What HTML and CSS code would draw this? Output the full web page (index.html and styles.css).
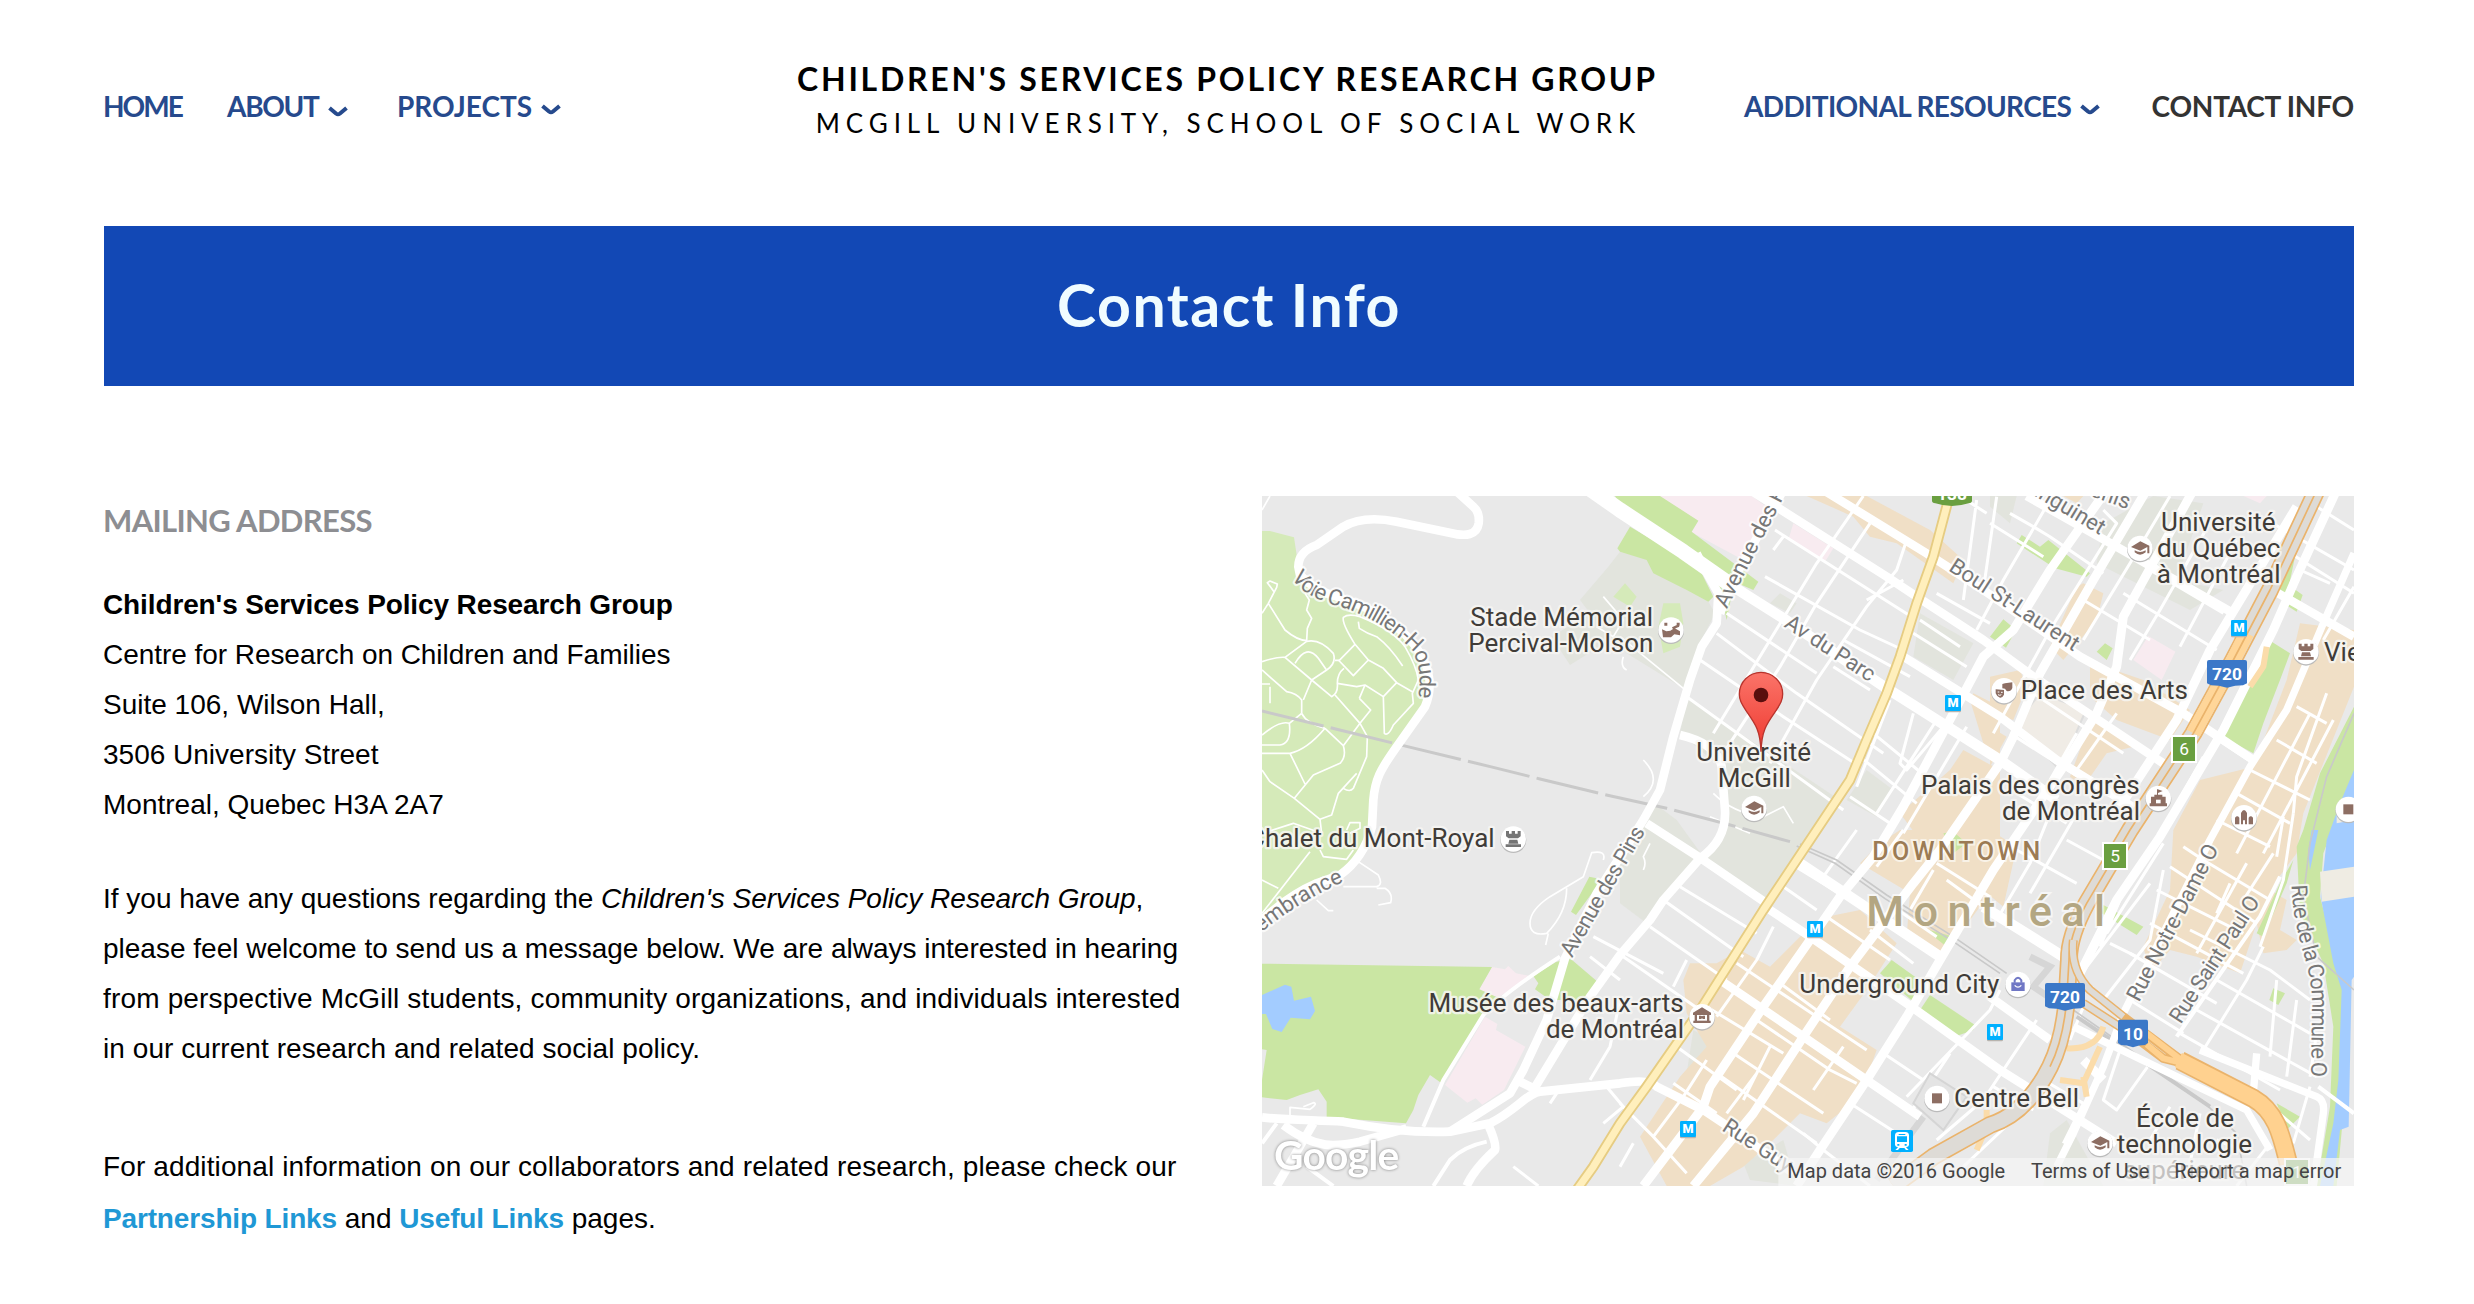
FILE: index.html
```
<!DOCTYPE html>
<html lang="en">
<head>
<meta charset="utf-8">
<title>Contact Info – Children's Services Policy Research Group</title>
<link rel="stylesheet" href="styles.css">
</head>
<body>
<header class="site-header">
  <nav class="nav nav-left">
    <a class="nav-item home" href="#">HOME</a>
    <a class="nav-item about" href="#">ABOUT<svg class="chevron low" viewBox="0 0 20 12"><path d="M1.500 2 8 7.500Q10 9 12 7.500L18.500 2"/></svg></a>
    <a class="nav-item projects" href="#">PROJECTS<svg class="chevron" viewBox="0 0 20 12"><path d="M1.500 2 8 7.500Q10 9 12 7.500L18.500 2"/></svg></a>
  </nav>
  <div class="brand">
    <div class="brand-title">CHILDREN'S SERVICES POLICY RESEARCH GROUP</div>
    <div class="brand-sub">MCGILL UNIVERSITY, SCHOOL OF SOCIAL WORK</div>
  </div>
  <nav class="nav nav-right">
    <a class="nav-item resources" href="#">ADDITIONAL RESOURCES<svg class="chevron" viewBox="0 0 20 12"><path d="M1.500 2 8 7.500Q10 9 12 7.500L18.500 2"/></svg></a>
    <a class="nav-item contact" href="#">CONTACT INFO</a>
  </nav>
</header>
<h1 class="banner">Contact Info</h1>
<main class="content">
  <section class="info">
    <h2 class="info-heading">MAILING ADDRESS</h2>
    <p class="address">
      <strong class="name">Children's Services Policy Research Group</strong><br>
      <span class="l0">Centre for Research on Children and Families</span><br>
      Suite 106, Wilson Hall,<br>
      3506 University Street<br>
      Montreal, Quebec H3A 2A7
    </p>
    <p class="message">
      <span class="l1">If you have any questions regarding the <em>Children's Services Policy Research Group</em>,</span><br>
      <span class="l2">please feel welcome to send us a message below. We are always interested in hearing</span><br>
      <span class="l3">from perspective McGill students, community organizations, and individuals interested</span><br>
      <span class="l4">in our current research and related social policy.</span>
    </p>
    <p class="more">
      <span class="l5">For additional information on our collaborators and related research, please check our</span><br>
      <a href="#">Partnership Links</a> and <a href="#">Useful Links</a> pages.
    </p>
  </section>
  <svg class="map" viewBox="36 48 3276 2070" role="img" aria-label="Map of downtown Montréal">
    <defs>
      <linearGradient id="pinfill" x1="0" y1="0" x2="0" y2="1"><stop offset="0" stop-color="#fb7469"/><stop offset="1" stop-color="#ee382f"/></linearGradient>
      <g id="disc"><circle cy="3" r="39" fill="#bbb"/><circle r="38" fill="#fff"/></g>
      <g id="grad"><use href="#disc"/><path class="brown" d="M-27-4 1-21 28-8V15H22V-4L1 7ZM-16 6Q0 16 17 6V12Q0 26-16 12Z"/></g>
      <g id="rook"><path d="M-22-24h9v8h8v-8h10v8h8v-8h9v16l-8 6h-28l-8-6ZM-12 2h24l3 12h-30ZM-23 16h46v8h-46Z"/></g>
      <g id="metro"><rect x="-24" y="-20" width="48" height="48" rx="4" fill="#b8b4ae"/><rect x="-24" y="-24" width="48" height="48" rx="4" fill="#00b0ff"/><text y="13" class="metro-m">M</text></g>
      <path id="shield" d="M-60-35Q-60-41-54-41H54Q60-41 60-35V29L48 35Q25 35 0 42Q-25 35-48 35L-60 29Z" fill="#3b78c8"/>
    </defs>
    <rect x="36" y="48" width="3276" height="2070" fill="#e9e9e9"/>

    <!-- campus grounds -->
    <g fill="#e2e4dd">
      <path d="M1110 215 1200 240 1220 280 1375 365 1395 400 1340 510 1300 625 1130 520 1080 480 960 555 905 470 1020 400 990 360 1075 260Z"/>
      <path d="M1310 650 1470 760 1770 960 1690 1080 1560 1280 1350 1140 1425 1050 1410 860 1290 760Z"/>
      <path d="M1200 960 1280 1020 1360 1130 1240 1260 1190 1330 1110 1270 1110 1130Z"/>
      <path d="M1850 870 1930 930 1880 1010 1790 960ZM2010 400 2170 490 2110 600 1990 530ZM1590 340 1640 370 1620 400 1560 370ZM2220 48 2300 48 2280 130 2220 80ZM2560 130 2710 48 2860 70 2780 300 2920 330 2820 390 2540 250ZM1330 1650 1420 1700 1380 1820 1310 1780ZM1480 2050 1600 1980 1640 2118 1500 2100ZM2400 1960 2450 1920 2560 2118 2380 2118Z"/>
    </g>
    <!-- commercial blocks -->
    <g fill="#f0dfc6">
      <path d="M1670 48H1850L2040 150 2140 240 2110 310 1940 190 1860 170 1810 110ZM2170 640 2250 680V850L2200 790 2160 660ZM2140 810 2250 870V1080H2010L1950 1000 2100 870Z"/>
      <path d="M2500 310 2560 340 2540 420 2440 540 2400 500 2480 320ZM2520 545 2680 600 2820 690 2760 780 2600 720 2520 650ZM2530 700 2650 800 2570 820 2500 920 2460 890ZM2220 590 2310 570 2330 620 2290 720 2220 700ZM2220 740 2270 770 2220 860ZM2440 48H2500L2480 70Z"/>
      <path d="M3150 430 3312 450V620L3220 850 3160 1000 3140 1120 3080 1200 3020 1330 2970 1480 2840 1430 2760 1410 2700 1480 2680 1400 2760 1230 2770 1050 2850 900 3010 860 3110 600Z"/>
      <path d="M3060 1230 3110 1260 3090 1350 3140 1380 3110 1410 3040 1420 3020 1330Z"/>
      <path d="M1890 1090 1950 1050H2250V1200L2070 1440 1970 1370 1980 1240 1830 1150ZM2220 1050 2300 1100 2260 1280 2200 1230Z"/>
      <path d="M1650 1370 1730 1310 1830 1290 1940 1390 1850 1530 1770 1640 1880 1710 1830 1850 1730 1930 1650 1900 1560 1990 1480 2060 1380 2118H1250L1170 1970 1290 1790 1370 1700 1310 1600 1300 1500 1320 1450 1400 1450 1470 1410 1560 1460Z"/>
    </g>
    <path d="M2370 640 2508 690 2430 870 2370 810 2300 730Z" fill="#f0ece6" stroke="#ddd" stroke-width="6"/>
    <!-- hospitals -->
    <g fill="#f8ebf0">
      <path d="M1225 48H1505L1555 85 1480 240 1325 157 1345 122ZM1630 130 1750 205 1725 245 1615 180ZM2695 468 2776 515 2735 600 2650 540ZM2980 48H3050L3030 70Z"/>
      <path d="M726 1461 765 1468 775 1458 798 1480 850 1490 780 1530 740 1555 688 1528ZM705 1610 742 1632 738 1650 826 1700 762 1830 697 1874 677 1855 652 1868 585 1815Z"/>
    </g>
    <!-- parks and water -->
    <path fill="#d5eab9" d="M36 153H60L132 172 140 225 135 270 230 330 400 400 500 500 530 600 520 670 440 790 400 860 370 950 365 1050 340 1090 300 1160 200 1210 36 1320ZM1125 310 1160 350 1140 380 1090 350ZM1240 370 1290 370 1300 430 1290 500 1240 520 1225 440Z"/>
    <g fill="#cae6a3">
      <path d="M36 1451 726 1461 688 1528 760 1560 700 1605 575 1810 540 1785 505 1845 490 1890 468 1930 230 1912V1865L205 1828 150 1845 110 1860 36 1852V1800L50 1710 36 1708Z"/>
      <path d="M850 1488 918 1446 960 1435 1040 1503 1000 1560 900 1560 855 1528 865 1510ZM1018 1190 1040 1195V1220L978 1305 963 1295Z"/>
      <path d="M1095 48H1230L1345 122 1325 155 1525 305 1510 330 1440 300 1110 75ZM1140 140 1102 205 1110 215 1190 240 1210 280 1310 330 1375 365 1390 350 1350 270 1260 210ZM1380 270 1450 320 1430 420 1410 330Z"/>
      <path d="M1925 1440 1995 1490 1990 1565 1890 1480ZM2040 1545 2175 1635 2170 1650 2120 1668 2010 1590ZM3065 485 3120 520 3090 600 3040 730 3010 820 2918 770ZM2315 165 2370 200 2395 180 2520 280 2510 290 2415 265 2300 190ZM2260 418 2298 450 2268 503 2220 470ZM2565 490 2588 505 2570 540 2540 515ZM2560 1275 2680 1340 2660 1365 2555 1300ZM3070 1525 3105 1540 3085 1575 3058 1560ZM3130 150 3160 110 3110 350 3060 340ZM3130 325 3158 345 3140 395 3100 370ZM2080 1060 2110 1055 2150 1090 2110 1120ZM2020 1345 2110 1370 2090 1400ZM3080 1870 3150 1910 3110 1950ZM3130 1140 3090 1210 3020 1360 3040 1370 3110 1210Z"/>
      <path d="M3312 680 3210 880 3160 1050 3140 1100 3150 1300 3220 1450 3250 1640 3240 1880 3200 2118H3260L3280 1900 3300 1700 3270 1480 3210 1250 3220 1120 3312 880Z"/>
    </g>
    <path fill="#a3ccff" d="M36 1545 105 1514 124 1520 132 1562 183 1550 195 1593 180 1618 122 1613 95 1656 67 1647 48 1602H36ZM3312 870 3270 970 3230 1080 3212 1250 3250 1450 3275 1530 3265 1800 3250 1930 3210 2118H3250L3270 1950 3296 1940 3305 1500 3312 1490ZM3185 1050H3205L3180 1170 3175 1110Z"/>
    <path fill="#efece3" d="M3210 1175 3312 1160V1250L3215 1265ZM3260 990 3312 980V1020L3260 1030Z"/>

    <!-- paths through the cemetery and minor lanes -->
    <g class="road" stroke-width="5">
      <path d="M36 400 55 370 80 322 82 312 60 303 52 308 72 335M55 370 105 450Q140 480 170 482L172 445 185 415 170 390 178 360 165 340"/>
      <path d="M36 545Q80 530 105 532L170 484Q210 475 250 520 260 550 230 570L185 600 105 532M36 570 110 635Q140 640 155 660L155 700M185 600 245 650Q265 640 262 610 262 580 282 565M135 550Q170 490 205 535L228 568"/>
      <path d="M255 541H268L315 493Q275 430 280 412 295 400 330 410 430 450 465 500 500 560 505 600L487 640 490 670 430 735Q415 770 403 760L400 650 440 608 487 635M325 425 328 445Q350 460 380 470 420 500 458 558"/>
      <path d="M265 540 310 587 355 540 315 493M355 540 400 565 440 608M262 610 320 620 345 615 328 655M345 615 400 650M255 645 330 730 352 770 350 830 310 925Q300 938 280 925M328 655 362 690 330 730 280 797 225 745M280 797Q290 830 270 850L190 885 133 955M225 745Q170 810 120 820L165 912M120 820H36M36 870 60 905 133 955 210 1018 245 1005 265 940 320 880"/>
      <path d="M155 700Q170 730 225 745M155 700 118 730Q90 720 36 765M118 730Q125 790 90 795H36M185 600 160 660M210 1018 215 1060M36 1060 130 1030 215 1060M36 1200 85 1225M36 1300 180 1115M60 612H36M60 670V620M290 1050 300 1028H330V1045L300 1060M210 1110 220 1130 290 1138 310 1110"/>
      <path d="M325 1145 385 1185Q400 1215 380 1220H280M380 1225H405Q430 1240 422 1268L385 1275M200 1260 235 1292H250M1060 1140Q1070 1110 1025 1118L1000 1190 900 1250Q840 1290 840 1330 840 1370 890 1360 950 1300 950 1225M895 1360 887 1395M36 90 60 48M120 1920V1882L180 1888Q205 1870 190 1868L160 1880M1110 470 1300 625M1060 350 1120 420 1090 470 1040 440M1120 530Q1110 560 1130 570M1180 1170Q1190 1150 1180 1130L1200 1090M1390 940Q1450 1000 1540 1010L1600 980 1630 1030M1380 1010 1500 1060M1180 840Q1240 900 1180 950"/>
    </g>
    <!-- minor streets -->
    <g class="road" stroke-width="9">
      <path d="M1575 150 2000 420M1545 290 1830 450 1960 510M1480 330 1760 520M1430 400 1700 580M1400 460 1640 640 1900 820M1350 540 1600 710 1830 860M1310 650 1560 830 1780 990M1860 130 1700 370 1590 560 1420 820M1840 48 1700 250 1560 480 1390 760M1960 300 1850 360M1970 180 1940 270 1850 380 1700 600 1560 850M1600 170 1570 210M1780 480 1980 590M1750 560 1860 630"/>
      <path d="M1920 660 1820 920M1990 700 1950 850 1970 870 2080 740M1870 760 2040 900M1830 830 2000 970M1800 950 1920 1030M2060 720 1880 1000M2150 740 1960 1060M1990 460 2150 560M2010 420 2130 500M2060 340 2220 430M2130 48 2210 100M2180 60 2140 360M2220 130 2380 230M2180 450 2260 300 2400 60M2240 50 2200 330M2280 100 2350 140 2400 170 2560 280M2560 90 2600 130 2400 450 2230 760M2760 48 2640 250 2500 480M2890 110 2730 390 2640 540M2960 180 2790 500M2500 360 2700 480M2620 340 2900 510M2700 270 2920 400"/>
      <path d="M3050 120 3312 270M3090 200 3312 340M3150 270 3240 310M3200 80 3312 150M3312 320 3220 480M2350 640 2620 820M2280 760 2500 900 2640 980M2300 940 2450 1030M2480 760 2400 900M2600 700 2480 870M2400 1000 2340 1150 2240 1320M2480 1000 2340 1240M2300 1110 2480 1210M2450 1080 2560 1140"/>
      <path d="M2860 830 2720 1080M2890 770 3010 850M3000 870 3180 960M2960 940 3120 1030M2900 1020 3060 1100M3180 700 2960 1120M3250 720 3040 1120M3140 680 3230 730M3080 780 3200 850M3230 640 3140 890 3130 1000M3100 1010 3080 1130M3070 1120 2980 1260M2800 1100 2860 1140 3060 1260M2760 1160 3020 1330M2720 1230 2980 1360M2700 1330 2980 1480M2640 1420 2900 1570M2560 1560 2700 1380 2740 1170M2860 1140 2760 1330M2990 1150 2840 1420M2940 1210 2900 1300"/>
      <path d="M2820 1350 3060 1470 3180 1560M2900 1500 3180 1660M2840 1590 3200 1790M2790 1660 3090 1830M3040 1400 2990 1500 2860 1710M3080 1500 3060 1730M3140 1560 3110 1790M3200 1660 3180 1790M3130 1000 3100 1200 3030 1400M2480 1500 2700 1210M2580 1390 2660 1430M2610 1260 2550 1400M2740 1090 2570 1360M2640 1560 2800 1660M3030 1850 3180 1980M3180 1820 3130 1990"/>
      <path d="M1290 1220 1520 1360M1240 1260 1480 1430M1200 1340 1430 1500M1120 1430 1350 1590M1310 1440 1270 1520M1600 1220 1700 1290M1620 1150 1800 1260M1460 1450 1640 1570 1850 1710M1370 1580 1600 1720M1280 1700 1460 1830M1270 1810 1400 1900M1570 1340 1520 1440 1400 1610M1730 1310 1920 1440M1590 1510 1740 1620M1860 1380 1780 1480M1520 1620 1740 1770 1820 1810M1450 1720 1720 1900M1400 1780 1700 1990M1560 1700 1480 1860M1520 1780 1430 1900M1710 1580 1580 1800M1780 1700 1690 1830M1860 1350 1990 1450M1930 1280 2060 1370M1880 1160 1960 1050M1820 1050 1720 1190"/>
      <path d="M1110 1870 1210 1970 1310 2080M1210 1970 1300 1850 1370 1740M1150 1990 1110 2060M1900 1720 2020 1800M1850 1800 2010 1910M1800 1870 1940 1960M1970 1850 2220 1590 2250 1530M2100 1720 1980 1900M1720 2010 1860 2118M1660 1960 1720 2010M2060 1980 2200 1860 2360 1620M2140 2060 2320 1890M2230 1820 2350 1890M2500 1580 2460 1680M2380 1800 2500 1870 2440 1990M2620 1680 2560 1860 2600 1890 2700 1750M2700 1980 2760 1880M2850 1900 2820 2050M2900 1980 3000 2020M3060 1990 2960 2118M1020 1430 1110 1500M1030 1370 1240 1480M1110 1560 1080 1700 1020 1800M1070 1820 1120 1880 1060 1930M920 1840 900 1870M790 2060 865 2118M2050 1170 1980 1290M2090 1200 2200 1280M2060 1150 2220 1250"/>
    </g>
    <!-- railway yards -->
    <g fill="none" stroke="#c9c9c9">
      <path stroke-width="9" stroke-dasharray="190 22" d="M36 693 440 792 730 862 870 897 1056 942 1250 985 1430 1032 1620 1085"/>
      <path stroke-width="5" d="M1650 1092 1760 1140 1910 1245 2110 1370 2270 1480M1640 1098 1755 1150 1905 1256 2110 1385 2250 1480M2470 1590 2620 1695 2870 1875 2960 1960 2990 2118"/>
      <path stroke-width="12" d="M2480 1610 2880 1880"/>
      <path stroke-width="20" stroke="#d6d6d6" d="M2340 1430 2400 1460 2350 1520 2440 1580M2020 1910 1880 2100"/>
      <path stroke-width="5" d="M3312 700 3230 890 3180 1090 3160 1250 3200 1430 3312 1530"/>
    </g>
    <path d="M2040 1780 2150 1850 2080 1950 1990 1870Z" fill="#e4e4e4" stroke="#d5d5d5" stroke-width="6"/>

    <!-- main streets -->
    <g class="road">
      <g stroke-width="26">
        <path d="M610 25 670 80Q690 98 686 130C680 170 640 165 620 163L440 125Q340 105 280 140L200 195Q145 215 145 260L150 285Q190 330 260 350C420 400 480 470 510 520 540 570 550 620 525 680L440 800C390 870 375 900 370 960L366 1040C350 1100 320 1150 270 1185L200 1210C130 1240 80 1280 36 1320"/>
        <path d="M36 1912C100 1920 200 1920 280 1925 380 1945 480 1960 600 1955L720 1930C800 1890 830 1840 870 1835L1110 1810Q1200 1795 1220 1820L1360 1890 1450 1950 1630 2080M100 1935C200 2010 260 2000 330 1985L470 1945"/>
        <path d="M600 1955 780 1840 820 1770 890 1620 945 1435 1040 1240 1180 1020 1230 930 1270 770 1320 600 1355 500 1400 430 1405 340 1360 260 1340 220M1410 400 1450 300 1600 30M1290 765Q1400 790 1415 860L1425 990Q1430 1080 1350 1135L1240 1260 1200 1320 1110 1425 1020 1550 850 1830M800 1800 860 1830"/>
        <path d="M190 1930 80 2118M715 1935Q740 1990 735 2010 670 2070 650 2118"/>
        <path d="M1500 30 1910 290 2000 350 2200 480 2350 590 2500 690 2740 850M1720 30 2030 220 2200 330 2490 530 2800 700 3010 840M2330 48 2600 200 2950 400M3050 320 3312 470M1960 530 2250 710 2420 840 2680 1000"/>
        <path d="M1190 1030 1360 1140 1550 1270M1560 1290 1680 1370 1970 1570 2250 1770 2600 1990M1410 1500 1660 1670 2010 1910M2220 1550 2400 1680"/>
      </g>
      <path stroke-width="32" d="M1650 1150 1830 1270 2070 1430M2200 1280 2440 1430"/>
      <path stroke-width="46" d="M1010 20 1110 90 1300 215 1450 320"/>
      <path stroke-width="32" d="M1450 320 1600 415 1910 625 2250 840 2420 960"/>
      <g stroke-width="27">
        <path d="M2570 30 2400 270 2290 450 2200 530 2110 700 1960 980 1870 1130 1770 1250 1680 1380 1540 1580 1380 1820 1360 1880 1180 2118"/>
        <path d="M2690 30 2530 300 2370 580 2290 770 2250 850 2070 1110 1990 1210 1800 1460 1660 1670 1510 1900 1330 2118"/>
        <path d="M2830 30 2620 410 2600 560 2540 700 2440 860 2230 1170 2070 1440 1970 1610 1850 1800 1710 2010 1640 2118"/>
        <path d="M3140 80 2880 510 2780 720 2610 980"/>
        <path d="M3260 30 3140 290 3070 450 2920 750 2730 1070 2600 1260 2480 1500"/>
        <path d="M2500 1740 2560 1800"/>
      </g>
      <path stroke-width="22" d="M3312 220 3220 430 3110 690 3000 860 2880 1080 2700 1440 2620 1600 2560 1760 2470 1960 2420 2060M2470 1640 2780 1790 2990 1890 3060 2010M2850 1710 3100 1810 3200 1850Q3225 1860 3220 1900L3190 2118M3020 1720 3010 1840"/>
      <path stroke-width="12" d="M3090 1190 3030 1310 2780 1670M520 1940 580 1800 700 1605Q760 1540 930 1430M710 1985Q640 2000 600 2040L550 2118M36 1990 80 1930M250 2118 170 2060M3205 1820 3312 1900"/>
    </g>
    <!-- Sherbrooke -->
    <g fill="none" stroke-linejoin="round">
      <path stroke="#e6cc82" stroke-width="32" d="M2095 60 2050 230 2000 370 1950 530 1910 640 1850 780 1800 900 1690 1065 1540 1290 1350 1590 1190 1820 1110 1930 1030 2060 980 2130"/>
      <path stroke="#ffefbc" stroke-width="21" d="M2095 60 2050 230 2000 370 1950 530 1910 640 1850 780 1800 900 1690 1065 1540 1290 1350 1590 1190 1820 1110 1930 1030 2060 980 2130"/>
    </g>
    <!-- expressways -->
    <g fill="none" stroke-linejoin="round">
      <path stroke="#fbdcaa" stroke-width="18" d="M2450 1705Q2540 1710 2560 1640M2430 1800 2500 1810 2550 1700M2500 1790 2510 1850M2210 1890V1940L2180 2010M3000 620 3040 560 3050 500M2960 460 2970 560M2990 1840 3080 1890 3120 2000"/>
      <path stroke="#eab36b" stroke-width="54" d="M3205 20 3060 330 2950 540 2830 760 2640 1050 2510 1270Q2456 1370 2457 1440L2450 1560Q2440 1680 2400 1760 2330 1900 2220 1935L2050 2030 1930 2118"/>
      <path stroke="#dedbd6" stroke-width="44" d="M3205 20 3060 330 2950 540 2830 760 2640 1050 2510 1270Q2456 1370 2457 1440L2450 1560Q2440 1680 2400 1760 2330 1900 2220 1935L2050 2030 1930 2118"/>
      <path stroke="#ffd699" stroke-width="44" d="M2990 460 2950 540 2830 760"/>
      <path stroke="#eab36b" stroke-width="5" d="M3205 20 3060 330 2950 540 2830 760 2640 1050 2510 1270Q2456 1370 2457 1440L2450 1560Q2440 1680 2400 1760"/>
      <path stroke="#eab36b" stroke-width="27" d="M2470 1380Q2460 1470 2520 1530L2620 1610 2800 1745M2500 1570 2640 1660 2740 1735 2800 1750"/>
      <path stroke="#dedbd6" stroke-width="18" d="M2470 1380Q2460 1470 2520 1530L2620 1610M2500 1570 2640 1660"/>
      <path stroke="#ffd18f" stroke-width="18" d="M2690 1660 2800 1745M2690 1693 2740 1735 2800 1750"/>
      <path stroke="#eab36b" stroke-width="58" d="M2790 1742 3010 1855C3080 1895 3095 1970 3115 2050"/>
      <path stroke="#ffd18f" stroke-width="48" d="M2785 1740 3010 1855C3080 1895 3095 1970 3115 2050"/>
    </g>

    <!-- street names -->
    <g class="street">
      <path id="voie" d="M124 293Q160 348 250 374 385 412 478 502 526 560 498 690"/><text><textPath href="#voie" textLength="575">Voie Camillien-Houde</textPath></text>
      <text transform="translate(1430 388) rotate(-63)">Avenue des Pins</text>
      <text transform="translate(1600 439) rotate(33)" textLength="308">Av du Parc</text>
      <text transform="translate(2093 270) rotate(33)" textLength="450">Boul St-Laurent</text>
      <text transform="translate(2550 166) rotate(31)" text-anchor="end">Sanguinet</text>
      <text transform="translate(2632 88) rotate(20)" text-anchor="end">St-Denis</text>
      <text transform="translate(2667 1568) rotate(-62.500)" textLength="520">Rue Notre-Dame O</text>
      <text transform="translate(2792 1634) rotate(-57)" textLength="440">Rue Saint Paul O</text>
      <path id="commune" d="M3125 1215C3130 1380 3180 1430 3186 1560L3183 1810"/><text><textPath href="#commune" textLength="582">Rue de la Commune O</textPath></text>
      <text transform="translate(966 1435) rotate(-60)" textLength="440">Avenue des Pins</text>
      <path id="remem" d="M-70 1450Q90 1290 282 1205"/><text text-anchor="end"><textPath href="#remem" startOffset="100%">Remembrance</textPath></text>
      <text transform="translate(1413 1950) rotate(33)" textLength="235">Rue Guy</text>
    </g>

    <!-- area names -->
    <text class="area" x="1867" y="1140" textLength="504">DOWNTOWN</text>
    <text class="city" x="1849" y="1338" textLength="716">Montréal</text>

    <!-- place names -->
    <g class="place">
      <g text-anchor="end">
        <text x="1209" y="437">Stade Mémorial</text><text x="1210" y="515">Percival-Molson</text>
        <text x="2669" y="942">Palais des congrès</text><text x="2670" y="1019">de Montréal</text>
        <text x="734" y="1102">Chalet du Mont-Royal</text>
        <text x="1301" y="1595">Musée des beaux-arts</text><text x="1302" y="1674">de Montréal</text>
      </g>
      <g text-anchor="middle">
        <text x="1511" y="843">Université</text><text x="1513" y="921">McGill</text>
        <text x="2905" y="152">Université</text><text x="2906" y="230">du Québec</text><text x="2906" y="309">à Montréal</text>
        <text x="2805" y="1940">École de</text><text x="2803" y="2018">technologie</text><text x="2803" y="2098">supérieure</text>
      </g>
      <text x="2312" y="657">Place des Arts</text><text x="3222" y="543">Vieux-Port</text>
      <text x="1648" y="1538">Underground City</text><text x="2112" y="1880">Centre Bell</text>
    </g>

    <!-- place markers -->
    <g class="brown">
      <g transform="translate(1263 450)"><use href="#disc"/><path d="M-27-2-14 4-2 2 10-6 27 4V16L10 13 0 22H-24ZM-20-22h9v9h-9ZM17-22h9v9h-9ZM3-8 22-17 25-10 6-2Z"/></g>
      <use href="#grad" x="1512" y="985"/><use href="#grad" x="2670" y="205"/><use href="#grad" x="2550" y="1990"/>
      <g transform="translate(3168 515)"><use href="#disc"/><use href="#rook"/></g>
      <g transform="translate(790 1077)" fill="#757575"><use href="#disc"/><use href="#rook"/></g>
      <g transform="translate(2262 632)"><use href="#disc"/><path d="M-25-4 0-2V12Q-5 22-12 21-22 18-25 8ZM3-22 25-25V-8Q20 4 8 1L3-6-5-7V-20Z"/><path d="M-19 4h5M-9 5h5M-18 12q6 4 10 0" stroke="#fff" stroke-width="3" fill="none"/></g>
      <g transform="translate(2725 955)"><use href="#disc"/><path d="M-2-27 13-22-1-16V-11H12V-5H22V15H26V24H-26V15H-22V-5H-12V-11H-4V-27Z"/><path d="M-7 4H7V15H-7Z" fill="#fff"/></g>
      <g transform="translate(2982 1013)"><use href="#disc"/><path d="M-9 20V-14Q0-32 9-14V20H3V8H-3V20ZM-27 20V0Q-20-8-14 0V20ZM14 20V0Q20-8 27 0V20Z"/></g>
      <g transform="translate(3295 988)"><use href="#disc"/><rect x="-15" y="-15" width="30" height="30"/></g>
      <g transform="translate(2061 1855)"><use href="#disc"/><rect x="-15" y="-15" width="30" height="30"/></g>
      <g transform="translate(1356 1610)"><use href="#disc"/><path d="M-27-12 0-28 27-12V-5H22V12H26V19H-26V12H-22V-5H-27Z"/><path d="M-15-5H15V12H-15Z" fill="#fff"/><path d="M-9-3h6l3 2 3-2h6v10h-6l-3-2-3 2h-6Z"/></g>
      <g transform="translate(2304 1513)" fill="#7077c5"><use href="#disc"/><path d="M-20-6H20V20H-20Z"/><path d="M-10-5V-12Q0-28 10-12V-5" fill="none" stroke="#7077c5" stroke-width="6"/><path d="M-10 3Q0 14 10 3" fill="none" stroke="#fff" stroke-width="4"/></g>
    </g>
    <use href="#metro" x="2109" y="669"/><use href="#metro" x="2967" y="444"/><use href="#metro" x="1695" y="1347"/><use href="#metro" x="1314" y="1947"/><use href="#metro" x="2235" y="1656"/>
    <g transform="translate(1956 1983)"><rect x="-33" y="-33" width="66" height="66" rx="5" fill="#00b0ff"/><path d="M-21-18Q-20-27-10-27H10Q20-27 21-18V12Q20 18 12 19L20 27H12L7 21H-7L-12 27H-20L-12 19Q-20 18-21 12Z" fill="#fff"/><path d="M-15-14H15V3H-15ZM-10-21H10V-18H-10ZM-14 9h6v5h-6ZM8 9h6v5h-6Z" fill="#00b0ff"/></g>

    <!-- route shields -->
    <g class="route">
      <use href="#shield" x="2931" y="581"/><text x="2931" y="600">720</text>
      <use href="#shield" x="2445" y="1550"/><text x="2445" y="1570">720</text>
      <use href="#shield" transform="translate(2649 1660) scale(.75 1)"/><text x="2649" y="1680">10</text>
      <path d="M2046 30H2166V62Q2166 68 2156 70 2106 86 2056 70 2046 68 2046 62Z" fill="#6a9f40"/><text x="2106" y="60">138</text>
    </g>
    <g class="exit">
      <rect x="2766" y="768" width="72" height="78"/><text x="2802" y="825">6</text>
      <rect x="2559" y="1089" width="72" height="78"/><text x="2595" y="1146">5</text>
      <rect x="3105" y="2037" width="72" height="78"/><text x="3141" y="2094">1</text>
    </g>

    <path d="M1533 815C1531 750 1515 730 1488 692 1474 670 1468 660 1468 642A65 65 0 0 1 1598 642C1598 660 1592 670 1578 692 1551 730 1535 750 1533 815Z" fill="url(#pinfill)" stroke="#b8332c" stroke-width="4"/>
    <circle cx="1533" cy="645" r="22" fill="#590f0e"/>

    <text class="logo" x="72" y="2071" textLength="376">Google</text>
    <rect x="1585" y="2034" width="1727" height="84" fill="#f5f5f5" fill-opacity=".72"/>
    <g class="legal">
      <text x="1612" y="2094">Map data ©2016 Google</text><text x="2343" y="2094">Terms of Use</text><text x="2773" y="2094">Report a map error</text>
    </g>
  </svg>
</main>
</body>
</html>
```
FILE: styles.css
```
* { box-sizing: border-box; }
body { margin: 0; padding: 0 120px 0 104px; background: #fff; color: #000; font-family: "Liberation Sans", Arial, sans-serif; }
a { text-decoration: none; }

.site-header { display: grid; grid-template-columns: 607px 1fr 610px; height: 226px; font-family: Lato, sans-serif; }
.nav { display: flex; padding-top: 89px; font-size: 28px; font-weight: 700; line-height: 34px; }
.nav-item { color: #264a8d; white-space: nowrap; }
.home { width: 123px; letter-spacing: -2px; text-indent: -1px; }
.about { width: 170px; letter-spacing: -1.3px; }
.projects { letter-spacing: 0; }
.resources { width: 408px; letter-spacing: -.65px; }
.contact { color: #333; letter-spacing: -.25px; }
.chevron { width: 20px; height: 12px; margin-left: 9px; fill: none; stroke: #264a8d; stroke-width: 4; }
.chevron, .chevron.low { position: relative; top: -1px; }
.chevron.low { top: 1px; }
.brand { padding-top: 59px; text-align: center; white-space: nowrap; }
.brand-title { font-size: 32px; font-weight: 700; line-height: 40px; letter-spacing: 2.74px; }
.brand-sub { margin-top: 5px; padding-left: 2px; font-size: 26px; line-height: 38px; letter-spacing: 5.9px; }

.banner { height: 160px; margin: 0; background: #1248b5; color: #f0fcff; font: 700 59px/158px Lato, sans-serif; letter-spacing: 1.5px; text-align: center; }

.content { display: grid; grid-template-columns: 1fr 1092px; padding-top: 110px; }
.info { padding-top: 5px; margin-left: -1px; font-size: 28px; line-height: 50px; white-space: nowrap; }
.info p { margin: 0; }
.info-heading { margin: 0 0 41px; color: #8d8e92; font: 700 31px/38px Lato, sans-serif; letter-spacing: -.65px; }
.info .address { margin-bottom: 44px; }
.name { letter-spacing: -.12px; }
.l0 { letter-spacing: -.05px; }
.l1 { letter-spacing: 0; }
.info .message { margin-bottom: 67px; }
.info .more { line-height: 52px; }
.info a { color: #1f98d5; font-weight: 700; letter-spacing: -.15px; }
.l3 { letter-spacing: .17px; }
.l4 { letter-spacing: .06px; }
.l5 { letter-spacing: .12px; }

.map { display: block; width: 1092px; height: 690px; overflow: hidden; font-family: Roboto, sans-serif; }
.road { fill: none; stroke: #fff; stroke-linejoin: round; }
.street { fill: #777; font-size: 66px; stroke: #fff; stroke-opacity: .75; stroke-width: 13; stroke-linejoin: round; paint-order: stroke; }
.street path { fill: none; stroke: none; }
.place { fill: #403c38; font-size: 78px; stroke: #f7f6f3; stroke-opacity: .85; stroke-width: 14; stroke-linejoin: round; paint-order: stroke; }
.area { fill: #9c7b54; font-size: 75px; font-weight: 500; stroke: #fff; stroke-opacity: .6; stroke-width: 12; paint-order: stroke; }
.city { fill: #b3a682; font-size: 130px; font-weight: 500; stroke: #fff; stroke-opacity: .6; stroke-width: 12; paint-order: stroke; }
.brown { fill: #8d6e63; }
.metro-m { fill: #fff; font-size: 38px; font-weight: 900; text-anchor: middle; }
.route text { fill: #fff; font-size: 52px; font-weight: 700; text-anchor: middle; }
.exit rect { fill: #6a9f40; stroke: #fff; stroke-width: 6; }
.exit text { fill: #fff; font-size: 52px; text-anchor: middle; }
.logo { fill: #fff; font: 700 122px Lato, sans-serif; filter: drop-shadow(0 0 5px rgba(0, 0, 0, .45)); }
.legal { fill: #444; font-size: 60px; }
```
